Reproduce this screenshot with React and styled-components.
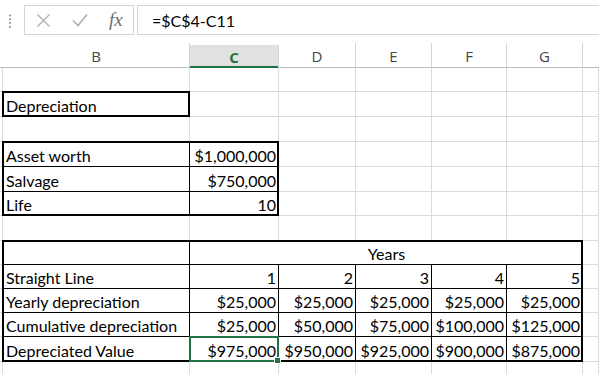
import React from 'react';
import styled, { createGlobalStyle } from 'styled-components';

const GREEN = '#217346';
const COLS = '3px 187px 89px 77px 76px 75px 76px 1fr';
const ROW_HEIGHTS = [24, 25, 25, 25, 25, 24, 25, 24, 24, 24, 24, 25, 25];
const HEADERS = ['', 'B', 'C', 'D', 'E', 'F', 'G', ''];

const Global = createGlobalStyle`
  html, body { margin: 0; padding: 0; background: #fff; overflow: hidden; }
  body { font-family: Lato, "Liberation Sans", sans-serif; }
`;

const Window = styled.div`
  width: 599px;
  height: 374px;
  overflow: hidden;
  display: flex;
  flex-direction: column;
  background: #fff;
`;

const FormulaBar = styled.div`
  flex: none;
  display: flex;
  align-items: flex-start;
  height: 43px;
  padding-top: 5px;
  box-sizing: border-box;
`;

const Grip = styled.svg`
  margin: 9px 0 0 8px;
  flex: none;
`;

const FxBox = styled.div`
  margin-left: 12px;
  width: 110px;
  height: 30px;
  box-sizing: border-box;
  border: 1px solid #d4d4d4;
  display: flex;
  align-items: center;
  gap: 21px;
  padding-left: 11px;
  flex: none;
`;

const FxLabel = styled.span`
  font-family: "Liberation Serif", serif;
  font-style: italic;
  font-size: 19px;
  color: #6e6e6e;
  line-height: 1;
  margin-top: -2px;
`;

const FormulaInput = styled.div`
  flex: 1;
  margin-left: 3px;
  height: 30px;
  box-sizing: border-box;
  border: 1px solid #d4d4d4;
  border-right: none;
  padding-left: 14px;
  display: flex;
  align-items: center;
  font-size: 16px;
  color: #000;
`;

const HeaderRow = styled.div`
  flex: none;
  display: grid;
  grid-template-columns: ${COLS};
  height: 25px;
  box-sizing: border-box;
  border-bottom: 1px solid #bcbcbc;
`;

const HeaderCell = styled.div`
  display: flex;
  align-items: flex-end;
  justify-content: center;
  padding-bottom: 1px;
  box-sizing: border-box;
  border-right: 1px solid ${(p) => (p.$edge ? 'transparent' : '#d5d5d5')};
  font-family: "Open Sans", sans-serif;
  font-size: 15px;
  color: ${(p) => (p.$selected ? GREEN : '#444')};
  font-weight: ${(p) => (p.$selected ? 700 : 400)};
  background: ${(p) => (p.$selected ? '#e1e1e1' : '#fff')};
  margin-top: ${(p) => (p.$selected ? '2px' : '0')};
  box-shadow: ${(p) => (p.$selected ? `inset 0 -2px 0 ${GREEN}` : 'none')};
  margin-bottom: ${(p) => (p.$selected ? '-1px' : '0')};
`;

const Sheet = styled.div`
  flex: none;
  display: grid;
  grid-template-columns: ${COLS};
  grid-template-rows: ${ROW_HEIGHTS.map((h) => `${h}px`).join(' ')};
`;

const GridCell = styled.div`
  grid-row: ${(p) => p.$r};
  grid-column: ${(p) => p.$c};
  border-right: 1px solid #dadada;
  border-bottom: 1px solid #dadada;
  box-sizing: border-box;
`;

const DataCell = styled.div`
  grid-row: ${(p) => p.$r};
  grid-column: ${(p) => `${p.$c} / span ${p.$span || 1}`};
  z-index: 1;
  background: #fff;
  box-sizing: border-box;
  border-right: 1px solid #000;
  border-bottom: 1px solid #000;
  display: flex;
  align-items: flex-end;
  justify-content: ${(p) =>
    p.$align === 'right' ? 'flex-end' : p.$align === 'center' ? 'center' : 'flex-start'};
  padding: 0 2px 1px 3px;
  font-size: 16px;
  line-height: 19px;
  color: #000;
  white-space: nowrap;
  overflow: hidden;
`;

const Frame = styled.div`
  grid-row: ${(p) => `${p.$r1} / ${p.$r2 + 1}`};
  grid-column: ${(p) => `${p.$c1} / ${p.$c2 + 1}`};
  margin: -1px 0 0 -1px;
  border: 2px solid ${(p) => p.$color || '#000'};
  z-index: ${(p) => (p.$color ? 3 : 2)};
  position: relative;
  pointer-events: none;
`;

const Handle = styled.div`
  position: absolute;
  right: -4px;
  bottom: -4px;
  width: 5px;
  height: 5px;
  background: ${GREEN};
  border: 1px solid #fff;
`;

const inputs = [
  ['Asset worth', '$1,000,000'],
  ['Salvage', '$750,000'],
  ['Life', '10'],
];

const mainRows = [
  ['Straight Line', ['1', '2', '3', '4', '5']],
  ['Yearly depreciation', ['$25,000', '$25,000', '$25,000', '$25,000', '$25,000']],
  ['Cumulative depreciation', ['$25,000', '$50,000', '$75,000', '$100,000', '$125,000']],
  ['Depreciated Value', ['$975,000', '$950,000', '$925,000', '$900,000', '$875,000']],
];

export default function App() {
  const bg = [];
  ROW_HEIGHTS.forEach((_, ri) => {
    for (let c = 1; c <= 8; c++) bg.push(<GridCell key={`g${ri}-${c}`} $r={ri + 1} $c={c} />);
  });

  return (
    <Window>
      <Global />
      <FormulaBar>
        <Grip width="4" height="15" viewBox="0 0 4 15">
          {[1.5, 5.3, 9.1, 12.9].map((y) => (
            <circle key={y} cx="2" cy={y} r="1.1" fill="#9a9a9a" />
          ))}
        </Grip>
        <FxBox>
          <svg width="15" height="15" viewBox="0 0 15 15">
            <path d="M1.5 1.5 L13.5 13.5 M13.5 1.5 L1.5 13.5" stroke="#b0b0b0" strokeWidth="1.4" fill="none" />
          </svg>
          <svg width="16" height="14" viewBox="0 0 16 14">
            <path d="M1 7.5 L6 12.5 L15 1.5" stroke="#b0b0b0" strokeWidth="1.7" fill="none" />
          </svg>
          <FxLabel>fx</FxLabel>
        </FxBox>
        <FormulaInput>=$C$4-C11</FormulaInput>
      </FormulaBar>

      <HeaderRow>
        {HEADERS.map((h, i) => (
          <HeaderCell key={i} $selected={h === 'C'} $edge={i === 0 || i === 7}>
            {h}
          </HeaderCell>
        ))}
      </HeaderRow>

      <Sheet>
        {bg}

        <DataCell $r={2} $c={2}>Depreciation</DataCell>
        <Frame $r1={2} $r2={2} $c1={2} $c2={2} />

        {inputs.map(([label, value], i) => (
          <React.Fragment key={label}>
            <DataCell $r={4 + i} $c={2}>{label}</DataCell>
            <DataCell $r={4 + i} $c={3} $align="right">{value}</DataCell>
          </React.Fragment>
        ))}
        <Frame $r1={4} $r2={6} $c1={2} $c2={3} />

        <DataCell $r={8} $c={2} />
        <DataCell $r={8} $c={3} $span={5} $align="center">Years</DataCell>
        {mainRows.map(([label, values], i) => (
          <React.Fragment key={label}>
            <DataCell $r={9 + i} $c={2}>{label}</DataCell>
            {values.map((v, j) => (
              <DataCell key={j} $r={9 + i} $c={3 + j} $align="right">{v}</DataCell>
            ))}
          </React.Fragment>
        ))}
        <Frame $r1={8} $r2={12} $c1={2} $c2={7} />

        <Frame $r1={12} $r2={12} $c1={3} $c2={3} $color={GREEN}>
          <Handle />
        </Frame>
      </Sheet>
    </Window>
  );
}
